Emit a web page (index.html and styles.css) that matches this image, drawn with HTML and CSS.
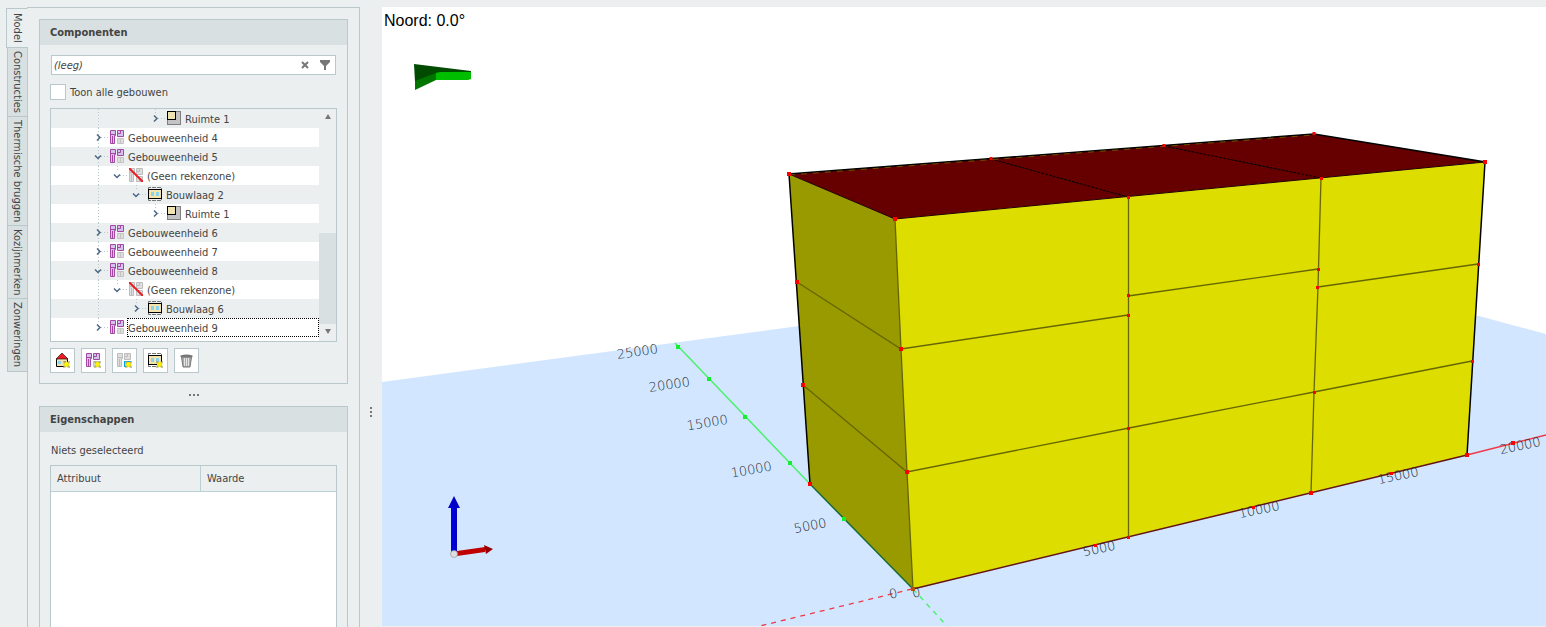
FILE: index.html
```html
<!DOCTYPE html>
<html lang="nl">
<head>
<meta charset="utf-8">
<title>Model</title>
<link rel="stylesheet" href="styles.css">
</head>
<body>
<svg class="defs" width="0" height="0" aria-hidden="true">
  <symbol id="line" viewBox="0 0 19 19"><path class="dots" d="M9.5 0V19"/></symbol>
  <symbol id="closed" viewBox="0 0 19 19"><path class="dots" d="M9.5 0V6M12 9.5H19"/><path class="chev" d="M8 6.5L11 9.5L8 12.5"/></symbol>
  <symbol id="open" viewBox="0 0 19 19"><path class="dots" d="M9.5 0V6M12 9.5H19"/><path class="chev" d="M6 8.5L9 11.5L12 8.5"/></symbol>
  <symbol id="unit" viewBox="0 0 14 14"><path d="M.5.5H5.500V5.500H4.500V13.500H.5ZM7.500.5H13.500V6.500H7.500Z" fill="#d3c3ec" stroke="#a349a4"/><path d="M.5 4.500H5.500M2.500 6V13M10.500 1V3.500H7.500" fill="none" stroke="#a349a4"/><path d="M7.500 8.500H13.500V13.500H7.500ZM10.500 8.500V13.500" fill="#dedede" stroke="#c3c3c3"/></symbol>
  <symbol id="zone" viewBox="0 0 14 14"><path d="M.5.5H5.500V5.500H4.500V13.500H.5ZM7.500.5H13.500V6.500H7.500ZM7.500 8.500H13.500V13.500H7.500ZM.5 4.500H5.500M2.500 6V13M10.500 1V3.500H7.500M10.500 8.500V13.500" fill="#dedede" stroke="#bdbdbd"/></symbol>
  <symbol id="nozone" viewBox="0 0 14 14"><use href="#zone"/><path d="M0 0L14 14" stroke="#ed1c24" stroke-width="2"/></symbol>
  <symbol id="floor" viewBox="0 0 14 14"><path d="M.5 2V.5H13.500V2M.5 12V13.500H13.500V12" fill="none" stroke="#777" stroke-dasharray="4 1"/><rect x=".5" y="2.500" width="13" height="9" fill="#f3e3ad" stroke="#000"/><path d="M3 5H6V9H3ZM8 5H11V9H8Z" fill="#8bd3ec"/></symbol>
  <symbol id="room" viewBox="0 0 14 14"><rect x=".5" y=".5" width="13" height="13" fill="#c3c3c3" stroke="#7f7f7f"/><rect x=".5" y=".5" width="8" height="8" fill="#efe4b0" stroke="#000"/></symbol>
  <symbol id="spark" viewBox="0 0 7 7"><path d="M0 0L3.500 1L7 0L6 3.500L7 7L3.500 6L0 7L1 3.500Z" fill="#a9a86a"/><circle cx="3.500" cy="3.500" r="2.400" fill="#fff200"/></symbol>
</svg>
<div class="app">
  <nav class="tabs">
    <button class="tab active">Model</button>
    <button class="tab">Constructies</button>
    <button class="tab">Thermische bruggen</button>
    <button class="tab">Kozijnmerken</button>
    <button class="tab">Zonweringen</button>
  </nav>
  <main class="side">
    <section class="group">
      <h2>Componenten</h2>
      <div class="content">
        <div class="search">
          <input type="text" value="(leeg)" aria-label="Zoeken">
          <button aria-label="Wissen"><svg width="8" height="8"><path d="M1 1L7 7M7 1L1 7" stroke="#777" stroke-width="2"/></svg></button>
          <button aria-label="Filter"><svg width="10" height="10"><path d="M0 0H10V2L6 6V10H4V6L0 2Z" fill="#777"/></svg></button>
        </div>
        <label class="check"><input type="checkbox">Toon alle gebouwen</label>
        <div class="tree">
          <ul>
            <li><i></i><i></i><svg><use href="#line"/></svg><i></i><i></i><svg><use href="#closed"/></svg><svg class="icon"><use href="#room"/></svg><span>Ruimte 1</span></li>
            <li><i></i><i></i><svg class="through"><use href="#closed"/></svg><svg class="icon"><use href="#unit"/></svg><span>Gebouweenheid 4</span></li>
            <li><i></i><i></i><svg class="through"><use href="#open"/></svg><svg class="icon"><use href="#unit"/></svg><span>Gebouweenheid 5</span></li>
            <li><i></i><i></i><svg><use href="#line"/></svg><svg><use href="#open"/></svg><svg class="icon"><use href="#nozone"/></svg><span>(Geen rekenzone)</span></li>
            <li><i></i><i></i><svg><use href="#line"/></svg><i></i><svg><use href="#open"/></svg><svg class="icon"><use href="#floor"/></svg><span>Bouwlaag 2</span></li>
            <li><i></i><i></i><svg><use href="#line"/></svg><i></i><i></i><svg><use href="#closed"/></svg><svg class="icon"><use href="#room"/></svg><span>Ruimte 1</span></li>
            <li><i></i><i></i><svg class="through"><use href="#closed"/></svg><svg class="icon"><use href="#unit"/></svg><span>Gebouweenheid 6</span></li>
            <li><i></i><i></i><svg class="through"><use href="#closed"/></svg><svg class="icon"><use href="#unit"/></svg><span>Gebouweenheid 7</span></li>
            <li><i></i><i></i><svg class="through"><use href="#open"/></svg><svg class="icon"><use href="#unit"/></svg><span>Gebouweenheid 8</span></li>
            <li><i></i><i></i><svg><use href="#line"/></svg><svg><use href="#open"/></svg><svg class="icon"><use href="#nozone"/></svg><span>(Geen rekenzone)</span></li>
            <li><i></i><i></i><svg><use href="#line"/></svg><i></i><svg><use href="#closed"/></svg><svg class="icon"><use href="#floor"/></svg><span>Bouwlaag 6</span></li>
            <li class="focus"><i></i><i></i><svg><use href="#closed"/></svg><svg class="icon"><use href="#unit"/></svg><span>Gebouweenheid 9</span></li>
          </ul>
          <div class="scroll">
            <svg width="6" height="5"><path d="M3 0L6 5H0Z" fill="#777"/></svg>
            <div class="thumb"></div>
            <svg width="6" height="5"><path d="M0 0H6L3 5Z" fill="#777"/></svg>
          </div>
        </div>
        <div class="tools">
          <button aria-label="Gebouw toevoegen"><svg width="15" height="15"><path d="M1.500 6.500V13.500H12.500V6.500L7 2Z" fill="#f3e3ad" stroke="#000"/><path d="M1 6L7 0L13 6Z" fill="#ed1c24" stroke="#000" stroke-width=".6"/><path d="M3 8H6V11H3Z" fill="#8bd3ec"/><path d="M9 8H11V13H9Z" fill="#b97a57"/><use href="#spark" x="8" y="8" width="7" height="7"/></svg></button>
          <button aria-label="Gebouweenheid toevoegen"><svg width="15" height="15"><use href="#unit" width="14" height="14"/><use href="#spark" x="8" y="8" width="7" height="7"/></svg></button>
          <button aria-label="Rekenzone toevoegen"><svg width="15" height="15"><use href="#zone" width="14" height="14"/><rect x="7.500" y="8.500" width="6" height="5" fill="#9bd9ea" stroke="#00a2e8"/><use href="#spark" x="8" y="8" width="7" height="7"/></svg></button>
          <button aria-label="Bouwlaag toevoegen"><svg width="15" height="15"><use href="#floor" width="14" height="14"/><use href="#spark" x="8" y="8" width="7" height="7"/></svg></button>
          <button aria-label="Verwijderen"><svg width="15" height="15"><path d="M2.500 4H12.500L11 14H4Z" fill="#aaa" stroke="#777"/><path d="M1.500 2.500Q7.500 .5 13.500 2.500V4H1.500Z" fill="#777"/><path d="M5.500 5V13M7.500 5V13M9.500 5V13" stroke="#e4e4e4"/></svg></button>
        </div>
      </div>
    </section>
    <div class="splitter"><b></b><b></b><b></b></div>
    <section class="group grow">
      <h2>Eigenschappen</h2>
      <div class="content">
        <p>Niets geselecteerd</p>
        <div class="grid">
          <table><thead><tr><th>Attribuut</th><th>Waarde</th></tr></thead></table>
        </div>
      </div>
    </section>
  </main>
  <div class="splitter upright"><b></b><b></b><b></b></div>
  <div class="view">
    <svg viewBox="382 7 1164 619" preserveAspectRatio="xMinYMin slice" role="img" aria-label="3D-model">
      <path d="M382 382L799 326L1479 316L1546 334V626H382Z" fill="#d2e7ff"/>
      <text class="noord" x="384" y="26">Noord: 0.0°</text>
      <path d="M414 64L471 71V73H440L415 82Z" fill="#004b00"/>
      <path d="M415 81L436 73V80L415 90Z" fill="#007500"/>
      <path d="M436 73L440 72H471V79L468 80H436Z" fill="#00bd00"/>

      <path d="M675 343L810 484" stroke="#4df06c" stroke-width="1.500"/>
      <path d="M1467 455L1546 435" stroke="#f03848" stroke-width="1.500"/>
      <path d="M912 589L760 626" stroke="#f03848" stroke-width="1.300" stroke-dasharray="5 5"/>
      <path d="M913 589L947 626" stroke="#4df06c" stroke-width="1.500" stroke-dasharray="5 5"/>

      <path d="M789 174L895 219L913 589L810 484Z" fill="#999900"/>
      <path d="M895 219L1485 162L1467 455L913 589Z" fill="#dddd00"/>
      <path d="M789 174L895 219L1485 162L1314 134Z" fill="#660000"/>
      <g class="edge">
        <path d="M797 282L901 349L1128 315M803 385L907 472L1129 428L1314 392L1472 361M1128 296L1318 269M1318 287L1478 264"/>
        <path d="M895 219L901 349L907 472L913 589M1128.500 197V537M1321 178L1318 287L1314 392L1311 493"/>
      </g>
      <path d="M991 159L1128 197M1164 146L1321 178" stroke="#000" stroke-dasharray="3 1"/>
      <path d="M810 484L789 174L1314 134L1485 162L1467 455" fill="none" stroke="#000" stroke-width="1.500"/>
      <path d="M789 174L895 219L1485 162" fill="none" stroke="#1e0000"/>
      <path d="M789 175L1314 135" stroke="#777700" stroke-width=".7" stroke-dasharray="6 6"/>
      <path d="M810 484L913 589" stroke="#176b35" stroke-width="1.500"/>
      <path d="M913 589L1467 455" stroke="#641414" stroke-width="1.500"/>

      <g class="labels">
        <text transform="translate(638 356) rotate(-8)">25000</text>
        <text transform="translate(670 389) rotate(-8)">20000</text>
        <text transform="translate(708 427) rotate(-9)">15000</text>
        <text transform="translate(752 474) rotate(-10)">10000</text>
        <text transform="translate(811 530) rotate(-11)">5000</text>
        <text transform="translate(894 598) rotate(-11)">0</text>
        <text transform="translate(917 597) rotate(-11)">0</text>
        <text transform="translate(1100 553) rotate(-12)">5000</text>
        <text transform="translate(1260 514) rotate(-12)">10000</text>
        <text transform="translate(1399 480) rotate(-12)">15000</text>
        <text transform="translate(1521 450) rotate(-12)">20000</text>
      </g>
      <path class="marks green" d="M678 347h0M709 379h0M745 417h0M790 463h0M844 519h0"/>
      <path class="marks" d="M789 174h0M895 219h0M1485 162h0M901 349h0M907 472h0M797 282h0M803 385h0M810 484h0M1467 455h0M1311 493h0M1513 443h0"/>
      <path class="marks small" d="M1128.500 197.500h0M1321.500 178.500h0M1314 133.500h0M1164 145.500h0M991 158.500h0M1128.500 315.500h0M1128.500 295.500h0M1318.500 269.500h0M1317.500 287.500h0M1478.500 264.500h0M1128.500 428.500h0M1314.500 392.500h0M1472.500 361.500h0M1128.500 537.500h0M1095.500 545.500h0M1253.500 507.500h0M1391.500 473.500h0"/>
      <rect x="911" y="587" width="4" height="4" fill="#b45309"/>

      <path d="M451 507H457V552H451ZM448 508L454 496L460 508Z" fill="#0000c8"/>
      <path d="M452 507V552" stroke="#0000ff"/>
      <path d="M457 551L485 547V552L457 556Z" fill="#c00000"/>
      <path d="M484 545L493 549L486 554Z" fill="#970000"/>
      <circle cx="454" cy="554" r="3.500" fill="#dedede" stroke="#999" stroke-width=".7"/>
    </svg>
  </div>
</div>
</body>
</html>
```

FILE: styles.css
```css
* { box-sizing: border-box; }
body { margin: 0; background: #ebeff0; color: #444; font: 11px/19px "DejaVu Sans Condensed", "Noto Sans", sans-serif; }
button, input { font: inherit; color: inherit; margin: 0; padding: 0; }
button { border: 0; background: none; }
.defs { position: absolute; }
.app { display: flex; height: 100vh; padding: 7px 0 0 6px; overflow: hidden; }
.tabs { display: flex; flex-direction: column; align-items: flex-end; width: 22px; margin-right: -1px; padding-top: 1px; z-index: 1; }
.tab { writing-mode: vertical-rl; width: 21px; margin-top: -1px; padding: 3px 0; border: 1px solid #b9c8cb; background: #d8e0e1; line-height: 19px; }
.tab.active { width: 22px; margin-top: 0; padding: 4px 0; border-right-color: #ebeff0; background: #ebeff0; }
.side { display: flex; flex-direction: column; width: 333px; flex: none; padding: 11px 11px 0; border: 1px solid #b9c8cb; border-bottom: 0; }
.group { border: 1px solid #b9c8cb; }
.grow { flex: 1; display: flex; flex-direction: column; border-bottom: 0; }
.grow .content { flex: 1; display: flex; flex-direction: column; padding-bottom: 0; }
h2 { margin: 0; padding: 0 10px; background: #d8e0e1; font-size: 11px; line-height: 25px; }
.content { padding: 10px; }
.search { display: flex; align-items: center; gap: 11px; height: 20px; margin-left: 1px; margin-right: 1px; padding-right: 5px; border: 1px solid #b9c8cb; background: #fff; }
.search input { flex: 1; min-width: 0; padding-left: 2px; border: 0; background: none; font-style: italic; height: 18px; }
.search button, .tools button { display: flex; align-items: center; justify-content: center; }
.check { display: flex; align-items: center; gap: 4px; height: 16px; margin: 9px 0 8px; }
.check input { appearance: none; width: 16px; height: 16px; border: 1px solid #b9c8cb; background: #fff; }
.tree { display: flex; border: 1px solid #b9c8cb; }
ul { flex: 1; margin: 0; padding: 0 0 4px; list-style: none; background: #fff; }
li { display: flex; align-items: flex-start; height: 19px; }
li:nth-child(odd) { background: #ebeff0; }
li i, li svg { width: 19px; height: 19px; flex: none; }
li .icon { width: 14px; height: 14px; margin: 2px 3px 0 2px; }
li span { flex: 1; height: 19px; line-height: 19px; border: 1px solid transparent; }
.focus span { border: 1px dotted #000; }
.through { background: repeating-linear-gradient(#b9c8cb 0 1px, transparent 1px 3px) 9px 0 / 1px 19px no-repeat; }
.dots { fill: none; stroke: #b9c8cb; stroke-dasharray: 1 2; }
.chev { fill: none; stroke: #4b6785; stroke-width: 1.5; }
.scroll { display: flex; flex-direction: column; align-items: center; width: 17px; padding: 5px 0 7px; }
.thumb { width: 17px; height: 91px; margin: auto 0 5px; background: #d8e0e1; }
.tools { display: flex; gap: 6px; margin-top: 6px; }
.tools button { width: 25px; height: 25px; border: 1px solid #b9c8cb; background: #fff; }
.splitter { display: flex; align-items: center; justify-content: center; gap: 2px; height: 22px; }
.splitter b { width: 2px; height: 2px; background: #777; }
.upright { flex: none; flex-direction: column; width: 22px; height: auto; margin-top: 190px; align-self: center; }
p { margin: 0 0 5px; padding-left: 1px; line-height: 18px; }
.grid { flex: 1; border: 1px solid #b9c8cb; border-bottom: 0; background: #fff; }
table { width: 100%; table-layout: fixed; border-collapse: separate; border-spacing: 0; }
th { height: 26px; padding: 0 6px; border-bottom: 1px solid #b9d0d5; background: #ebeff0; text-align: left; font-weight: 400; }
th:first-child { width: 150px; border-right: 1px solid #b9d0d5; }
.view { flex: 1; min-width: 0; margin-bottom: 1px; background: #fff; }
.view svg { display: block; width: 100%; height: 100%; }
.noord { font: 16px "Liberation Sans", Arial, sans-serif; fill: #000; }
.labels { font: 200 13px "DejaVu Sans", sans-serif; text-anchor: middle; fill: #222a33; }
.edge { fill: none; stroke: #666600; stroke-width: 1.3; }
.marks { stroke: #f00; stroke-width: 4; stroke-linecap: square; }
.marks.small { stroke-width: 3; }
.marks.green { stroke: #13ef2f; }
```
